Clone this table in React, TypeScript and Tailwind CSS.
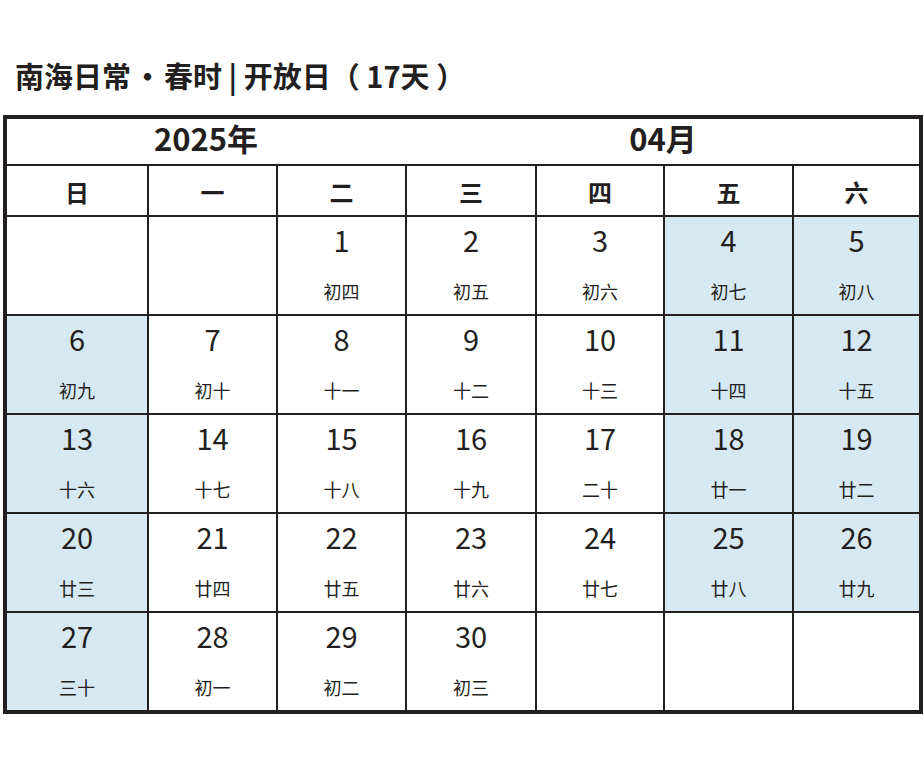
import React from 'react';

const weekdays = ['日', '一', '二', '三', '四', '五', '六'];

const lunar = [
  '初四', '初五', '初六', '初七', '初八', '初九', '初十',
  '十一', '十二', '十三', '十四', '十五', '十六', '十七',
  '十八', '十九', '二十', '廿一', '廿二', '廿三', '廿四',
  '廿五', '廿六', '廿七', '廿八', '廿九', '三十', '初一',
  '初二', '初三',
];

// April 2025 starts on a Tuesday
const FIRST_WEEKDAY = 2;

// open days: Fri, Sat, Sun
const OPEN_COLUMNS = [0, 5, 6];

type Cell = { day: number; lunar: string } | null;

function buildCells(): Cell[] {
  const cells: Cell[] = [];
  for (let i = 0; i < FIRST_WEEKDAY; i++) cells.push(null);
  lunar.forEach((l, i) => cells.push({ day: i + 1, lunar: l }));
  while (cells.length % 7 !== 0) cells.push(null);
  return cells;
}

function App() {
  const cells = buildCells();

  return (
    <div className="w-[924px] h-[760px] bg-white text-[#231f20] font-['Noto_Sans_CJK_SC','Noto_Sans',sans-serif]">
      <h1 className="pt-[57px] pl-[15px] text-[29px] leading-[36px] font-bold">
        南海日常<span className="px-[2px]">·</span>春时 | 开放日（ 17天 ）
      </h1>

      <div className="mt-[22px] ml-[3px] w-[920px] border-4 border-[#231f20] bg-[#231f20] grid grid-cols-[140px_127px_127px_128px_126px_127px_125px] gap-[2px]">
        {/* year / month header */}
        <div className="col-span-7 bg-white h-[45px] grid grid-cols-[140px_127px_127px_128px_126px_127px_125px] gap-x-[2px]">
          <div className="col-span-3 flex justify-center pt-[3px] text-[31px] leading-[31px] font-bold">2025年</div>
          <div className="col-span-4 flex justify-center pt-[3px] text-[31px] leading-[31px] font-bold">04月</div>
        </div>

        {weekdays.map(w => (
          <div key={w} className="bg-white h-[49px] flex items-center justify-center pt-[3px] text-[24px] leading-[24px] font-bold">
            {w}
          </div>
        ))}

        {cells.map((c, i) => {
          const open = c && OPEN_COLUMNS.includes(i % 7);
          return (
            <div key={i} className={`${open ? 'bg-[#d6e8f2]' : 'bg-white'} h-[97px] flex flex-col items-center pt-[8px]`}>
              {c && (
                <>
                  <span className="text-[29px] leading-[29px]">{c.day}</span>
                  <span className="mt-[28px] text-[18px] leading-[18px]">{c.lunar}</span>
                </>
              )}
            </div>
          );
        })}
      </div>
    </div>
  );
}

export default App;
